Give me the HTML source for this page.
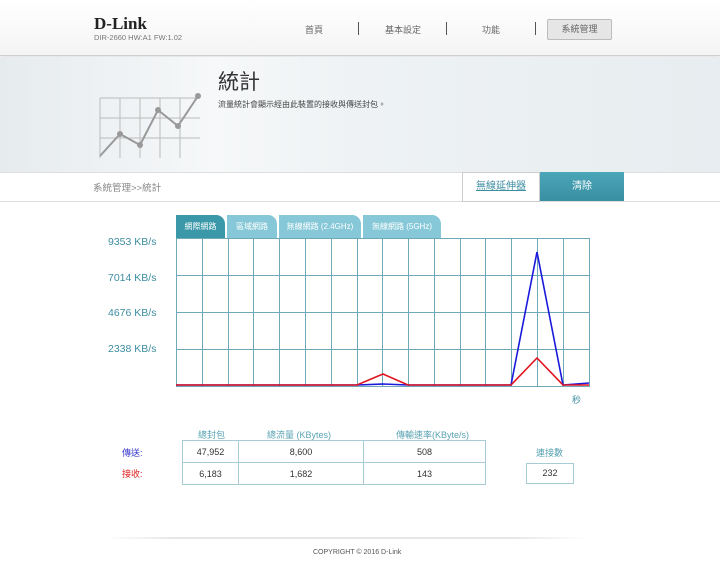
<!DOCTYPE html>
<html><head><meta charset="utf-8"><style>
*{margin:0;padding:0;box-sizing:border-box}
body{width:720px;height:584px;background:#fff;font-family:"Liberation Sans","Noto Sans CJK TC",sans-serif;position:relative;overflow:hidden}
.a{position:absolute}
.hdr{left:0;top:0;width:720px;height:56px;background:linear-gradient(#fff,#f4f4f4);border-bottom:1px solid #cfcfcf;box-shadow:0 1px 3px rgba(0,0,0,.15)}
.nav{font-size:9px;color:#666;top:23px}
.sep{width:1px;height:13px;background:#555;top:22px}
.ban{left:0;top:57px;width:720px;height:115px;background:linear-gradient(90deg,#e6ebee 0%,#f6f8f9 30%,#eef2f4 50%,#e7edf0 100%)}
.tab{top:215px;height:23px;border-radius:0 9px 0 0;font-size:8px;color:#fff;text-align:center;line-height:23px;background:#86c8d7}
.lab{font-size:10.5px;color:#3d8da0;left:108px}
td{border:1px solid #a8ccd6;text-align:center;font-size:9px;color:#333;height:22px}
</style></head><body>
<div class="a hdr"></div>
<div class="a" style="left:94px;top:14px;font-family:'Liberation Serif',serif;font-weight:bold;font-size:17px;color:#222">D-Link</div>
<div class="a" style="left:94px;top:33px;font-size:7.5px;color:#777">DIR-2660 HW:A1 FW:1.02</div>
<div class="a nav" style="left:305px">首頁</div>
<div class="a sep" style="left:358px"></div>
<div class="a nav" style="left:385px">基本設定</div>
<div class="a sep" style="left:446px"></div>
<div class="a nav" style="left:482px">功能</div>
<div class="a sep" style="left:535px"></div>
<div class="a" style="left:547px;top:19px;width:65px;height:21px;border:1px solid #bbb;border-radius:2px;background:#e6e6e6;font-size:9px;color:#666;text-align:center;line-height:19px">系統管理</div>
<div class="a ban"></div>
<svg class="a" style="left:95px;top:88px" width="110" height="70">
<g stroke="#bbb" stroke-width="1" fill="none">
<path d="M5 10H105M5 30H105M5 50H105M25 10V70M45 10V70M65 10V70M85 10V70M5 10V70"/></g>
<polyline points="5,68 25,46 45,57 63,22 83,38 103,8" stroke="#999" stroke-width="2" fill="none"/>
<g fill="#999"><circle cx="25" cy="46" r="3"/><circle cx="45" cy="57" r="3"/><circle cx="63" cy="22" r="3"/><circle cx="83" cy="38" r="3"/><circle cx="103" cy="8" r="3"/></g>
</svg>
<div class="a" style="left:218px;top:66px;font-size:21px;color:#333">統計</div>
<div class="a" style="left:218px;top:99px;font-size:8px;color:#444">流量統計會顯示經由此裝置的接收與傳送封包。</div>
<div class="a" style="left:0;top:172px;width:720px;height:30px;border-top:1px solid #ddd;border-bottom:1px solid #ddd;background:#fff"></div>
<div class="a" style="left:93px;top:180px;font-size:9.5px;color:#888">系統管理>>統計</div>
<div class="a" style="left:462px;top:172px;width:78px;height:30px;border:1px solid #ccc;font-size:10px;color:#3d8da0;text-decoration:underline;text-align:center;line-height:28px">無線延伸器</div>
<div class="a" style="left:540px;top:172px;width:84px;height:29px;background:linear-gradient(#4aa6b8,#3a8fa2);font-size:10px;color:#fff;text-align:center;line-height:29px">清除</div>
<div class="a tab" style="left:176px;width:49px;background:#3a98a9">網際網路</div>
<div class="a tab" style="left:227px;width:50px">區域網路</div>
<div class="a tab" style="left:279px;width:82px">無線網路 (2.4GHz)</div>
<div class="a tab" style="left:363px;width:78px">無線網路 (5GHz)</div>
<div class="a lab" style="top:236px">9353 KB/s</div>
<div class="a lab" style="top:272px">7014 KB/s</div>
<div class="a lab" style="top:307px">4676 KB/s</div>
<div class="a lab" style="top:343px">2338 KB/s</div>
<svg class="a" style="left:0;top:0" width="720" height="400">
<g stroke="#6fa9b7" stroke-width="1" fill="none">
<rect x="176.5" y="238.5" width="413" height="148"/>
<path d="M176 275.5H589M176 312.5H589M176 349.5H589"/>
<path d="M202.5 238V386M228.5 238V386M253.5 238V386M279.5 238V386M305.5 238V386M331.5 238V386M357.5 238V386M382.5 238V386M408.5 238V386M434.5 238V386M460.5 238V386M485.5 238V386M511.5 238V386M537.5 238V386M563.5 238V386"/>
</g>
<polyline points="176,385 357,385 383,384 408,385 511,385 537,252 563,385 589,383" stroke="#1a1adb" stroke-width="1.6" fill="none"/>
<polyline points="176,385 357,385 383,374 408,385 511,385 537,358 563,385 589,385" stroke="#e0141e" stroke-width="1.6" fill="none"/>
</svg>
<div class="a" style="left:572px;top:393px;font-size:9px;color:#3d8da0">秒</div>
<div class="a" style="left:198px;top:428px;font-size:9px;color:#5aa3b3">總封包</div>
<div class="a" style="left:267px;top:428px;font-size:9px;color:#5aa3b3">總流量 (KBytes)</div>
<div class="a" style="left:396px;top:428px;font-size:9px;color:#5aa3b3">傳輸速率(KByte/s)</div>
<div class="a" style="left:536px;top:446px;font-size:9px;color:#5aa3b3">連接數</div>
<div class="a" style="left:122px;top:446px;font-size:9px;color:#3333cc">傳送:</div>
<div class="a" style="left:122px;top:467px;font-size:9px;color:#e02020">接收:</div>
<table class="a" style="left:182px;top:440px;width:304px;border-collapse:collapse">
<tr><td style="width:56px">47,952</td><td style="width:125px">8,600</td><td>508</td></tr>
<tr><td>6,183</td><td>1,682</td><td>143</td></tr></table>
<div class="a" style="left:526px;top:463px;width:48px;height:21px;border:1px solid #a8ccd6;font-size:9px;color:#333;text-align:center;line-height:19px">232</div>
<div class="a" style="left:105px;top:537px;width:480px;height:2px;background:linear-gradient(90deg,transparent,#e6e6e6 15%,#e6e6e6 85%,transparent)"></div>
<div class="a" style="left:313px;top:549px;font-size:7px;color:#555">COPYRIGHT © 2016 D-Link</div>
</body></html>
